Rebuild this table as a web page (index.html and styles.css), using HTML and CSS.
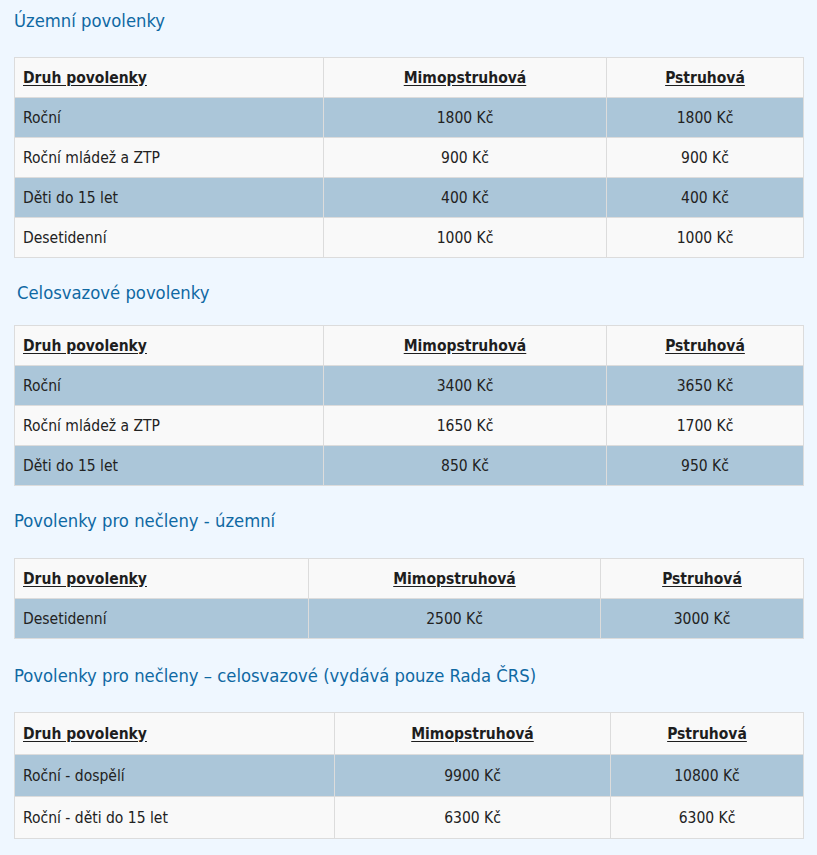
FILE: index.html
```html
<!DOCTYPE html>
<html lang="cs">
<head>
<meta charset="utf-8">
<title>Povolenky</title>
<link rel="stylesheet" href="styles.css">
</head>
<body>
<main class="page">
  <section class="sec sec-1">
    <h2 class="title">Územní povolenky</h2>
    <table class="prices prices-a">
      <colgroup><col class="c1"><col class="c2"><col class="c3"></colgroup>
      <thead><tr><th class="left">Druh povolenky</th><th>Mimopstruhová</th><th>Pstruhová</th></tr></thead>
      <tbody>
        <tr class="odd"><td class="left">Roční</td><td>1800 Kč</td><td>1800 Kč</td></tr>
        <tr><td class="left">Roční mládež a ZTP</td><td>900 Kč</td><td>900 Kč</td></tr>
        <tr class="odd"><td class="left">Děti do 15 let</td><td>400 Kč</td><td>400 Kč</td></tr>
        <tr><td class="left">Desetidenní</td><td>1000 Kč</td><td>1000 Kč</td></tr>
      </tbody>
    </table>
  </section>
  <section class="sec sec-2">
    <h2 class="title title-indent">Celosvazové povolenky</h2>
    <table class="prices prices-a">
      <colgroup><col class="c1"><col class="c2"><col class="c3"></colgroup>
      <thead><tr><th class="left">Druh povolenky</th><th>Mimopstruhová</th><th>Pstruhová</th></tr></thead>
      <tbody>
        <tr class="odd"><td class="left">Roční</td><td>3400 Kč</td><td>3650 Kč</td></tr>
        <tr><td class="left">Roční mládež a ZTP</td><td>1650 Kč</td><td>1700 Kč</td></tr>
        <tr class="odd"><td class="left">Děti do 15 let</td><td>850 Kč</td><td>950 Kč</td></tr>
      </tbody>
    </table>
  </section>
  <section class="sec sec-3">
    <h2 class="title">Povolenky pro nečleny - územní</h2>
    <table class="prices prices-b">
      <colgroup><col class="c1"><col class="c2"><col class="c3"></colgroup>
      <thead><tr><th class="left">Druh povolenky</th><th>Mimopstruhová</th><th>Pstruhová</th></tr></thead>
      <tbody>
        <tr class="odd"><td class="left">Desetidenní</td><td>2500 Kč</td><td>3000 Kč</td></tr>
      </tbody>
    </table>
  </section>
  <section class="sec sec-4">
    <h2 class="title">Povolenky pro nečleny – celosvazové (vydává pouze Rada ČRS)</h2>
    <table class="prices prices-c">
      <colgroup><col class="c1"><col class="c2"><col class="c3"></colgroup>
      <thead><tr><th class="left">Druh povolenky</th><th>Mimopstruhová</th><th>Pstruhová</th></tr></thead>
      <tbody>
        <tr class="odd"><td class="left">Roční - dospělí</td><td>9900 Kč</td><td>10800 Kč</td></tr>
        <tr><td class="left">Roční - děti do 15 let</td><td>6300 Kč</td><td>6300 Kč</td></tr>
      </tbody>
    </table>
  </section>
</main>
</body>
</html>
```
FILE: styles.css
```css
html, body {
  margin: 0;
  padding: 0;
  background: #eff7ff;
}
body {
  font-family: "DejaVu Sans Condensed", "DejaVu Sans", sans-serif;
  font-stretch: condensed;
  color: #222222;
  font-size: 15.5px;
}
.page {
  padding: 9px 15px 16px 14px;
}
.title {
  margin: 0;
  font-size: 18.3px;
  line-height: 24px;
  font-weight: normal;
  color: #0f69a3;
}
.title-indent {
  padding-left: 3px;
}
.sec-1 .prices { margin-top: 24px; }
.sec-2 { margin-top: 23px; }
.sec-2 .prices { margin-top: 20px; }
.sec-3 { margin-top: 23px; }
.sec-3 .prices { margin-top: 25px; }
.sec-4 { margin-top: 25px; }
.sec-4 .prices { margin-top: 24px; }

.prices {
  width: 789px;
  border-collapse: collapse;
  table-layout: fixed;
  background: #f9f9f9;
}
.prices th, .prices td {
  border: 1px solid #dcdcdc;
  height: 39px;
  padding: 0 8px;
  text-align: center;
  vertical-align: middle;
  line-height: 18px;
}
.prices th {
  font-weight: bold;
  text-decoration: underline;
  text-underline-offset: 2px;
  color: #1e1e1e;
}
.prices .left { text-align: left; }
.prices tr.odd { background: #abc6d9; }

.prices-a .c1 { width: 309px; }
.prices-a .c2 { width: 283px; }
.prices-a .c3 { width: 197px; }
.prices-b .c1 { width: 294px; }
.prices-b .c2 { width: 292px; }
.prices-b .c3 { width: 203px; }
.prices-c .c1 { width: 320px; }
.prices-c .c2 { width: 276px; }
.prices-c .c3 { width: 193px; }
.prices-c th, .prices-c td { height: 41px; }
```
